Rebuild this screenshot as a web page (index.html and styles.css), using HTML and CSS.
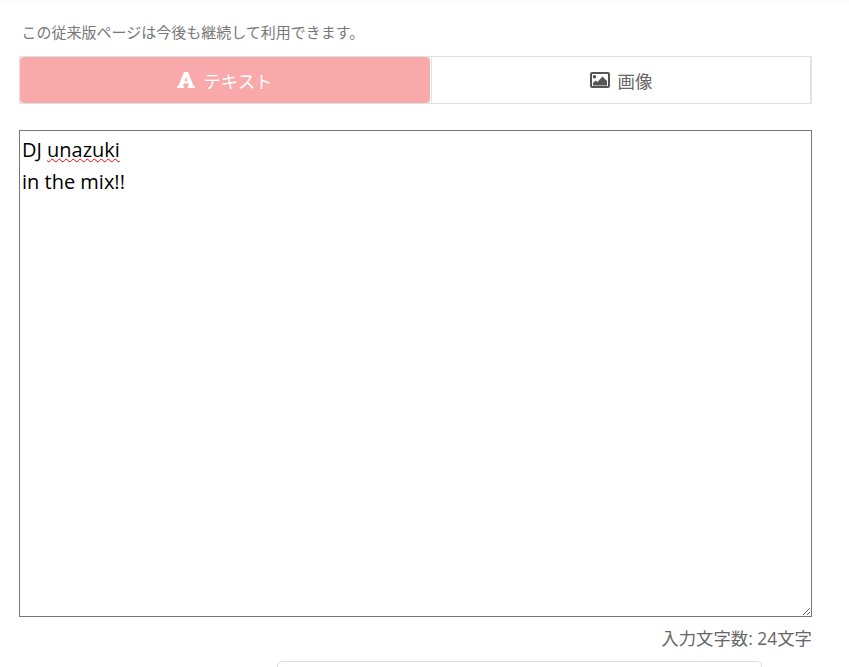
FILE: index.html
```html
<!DOCTYPE html>
<html lang="ja">
<head>
<meta charset="utf-8">
<title>テキスト入力</title>
<link rel="stylesheet" href="styles.css">
</head>
<body>
<div class="topbar"></div>
<main class="page">
  <p class="note">この従来版ページは今後も継続して利用できます。</p>
  <div class="tabs">
    <div class="tab tab-active">
      <svg class="icon-a" viewBox="0 0 18 16" aria-hidden="true"><path d="M0 16v-2h1.400L7 0h4l5.600 14H18v2h-7.200v-2h1.300l-.9-2.500H6.800L5.900 14h1.300v2zM7.600 9.200h2.800L9 5z"/></svg>
      <span>テキスト</span>
    </div>
    <div class="tab">
      <svg class="icon-img" viewBox="0 0 20 16" aria-hidden="true"><path fill-rule="evenodd" d="M2 0h16a2 2 0 0 1 2 2v12a2 2 0 0 1-2 2H2a2 2 0 0 1-2-2V2a2 2 0 0 1 2-2zm0 2v12h16V2zm2.500 1a1.800 1.800 0 1 1 0 3.600 1.800 1.800 0 0 1 0-3.600zM3 13.500v-2.500l2.500-2.500L7.500 10 12.500 4.500 17 9v4.500z"/></svg>
      <span>画像</span>
    </div>
  </div>
  <div class="editor">DJ <span class="misspelled">unazuki</span>
in the mix!!</div>
  <p class="counter">入力文字数: 24文字</p>
  <div class="bottom-row"><div class="select-box"></div></div>
</main>
</body>
</html>
```
FILE: styles.css
```css
* { box-sizing: border-box; }
html, body { margin: 0; padding: 0; height: 100%; overflow: hidden; background: #fff; }
body { font-family: "Open Sans", "Noto Sans CJK JP", sans-serif; color: #666; }
.topbar { height: 3px; background: #fcfcfc; }
.page { width: 812px; padding-left: 19px; }
.note { margin: 0; padding: 19px 0 0 2.500px; height: 53px; font-size: 15px; line-height: 21px; color: #777; }
.tabs { display: flex; height: 48px; border: 1px solid #dee2e6; border-right-width: 2px; }
.tab { display: flex; align-items: center; justify-content: center; gap: 8px; font-size: 17.400px; color: #666; }
.tab-active { flex: 0 0 410px; background: #f9a9a9; color: #fff; border-radius: 4px; margin-right: 1px; }
.tab:not(.tab-active) { flex: 1; border-left: 1px solid #dee2e6; }
.icon-a { width: 18px; height: 16px; fill: #fff; }
.icon-img { width: 20px; height: 16px; fill: #555; }
.editor { margin-top: 26px; height: 487px; width: 793px; padding: 3px 2px; border: 1px solid #767676; background: #fff; color: #000; font-size: 20px; line-height: 32px; white-space: pre-wrap; resize: both; overflow: auto; }
.misspelled { text-decoration: underline wavy #f00; text-decoration-thickness: 1px; text-underline-offset: 1px; }
.counter { margin: 9px 0 0; text-align: right; font-size: 17.400px; line-height: 24px; color: #666; }
.bottom-row { padding-left: 258px; margin-top: 11px; }
.select-box { width: 485px; height: 40px; border: 1px solid #ddd; border-radius: 5px; }
```
